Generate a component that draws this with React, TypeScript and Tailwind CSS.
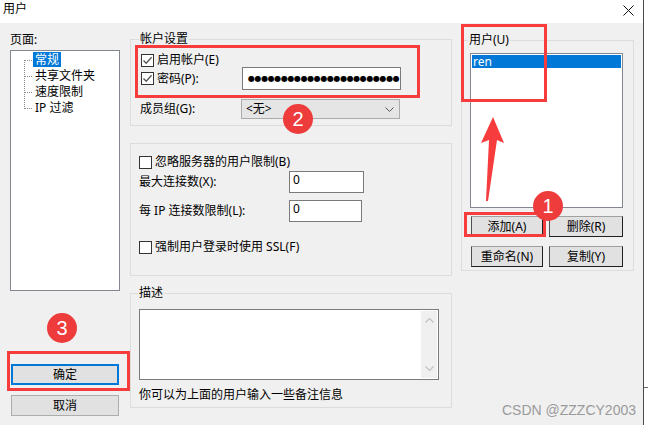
import React from 'react';

function Checkbox({ checked }: { checked?: boolean }) {
  return (
    <span className="w-[13px] h-[13px] border border-[#333333] bg-white flex items-center justify-center shrink-0">
      {checked && (
        <svg width="11" height="11" viewBox="0 0 11 11">
          <path d="M1.5 5.5 L4.2 8.3 L9.6 2.2" stroke="#555555" strokeWidth="1.3" fill="none" />
        </svg>
      )}
    </span>
  );
}

function ClassicButton({ label, className = '' }: { label: string; className?: string }) {
  return (
    <div
      className={`h-[21px] flex items-center justify-center bg-[#e1e1e1] border border-t-[#a0a0a0] border-l-[#505050] border-r-[#202020] border-b-[#202020] ${className}`}
    >
      {label}
    </div>
  );
}

function TextBox({ value, className = '' }: { value: string; className?: string }) {
  return (
    <div className={`h-[22px] border border-[#7a7a7a] bg-white pl-[3px] pt-[1px] leading-[14px] ${className}`}>
      {value}
    </div>
  );
}

function Badge({ n, className }: { n: string; className: string }) {
  return (
    <div
      className={`absolute w-[30px] h-[30px] rounded-full bg-[#ee3b3b] text-white flex items-center justify-center text-[20px] leading-none font-['Liberation_Sans',sans-serif] ${className}`}
    >
      {n}
    </div>
  );
}

export default function App() {
  const treeItems = ['常规', '共享文件夹', '速度限制', 'IP 过滤'];

  return (
    <div className="relative w-[648px] h-[425px] overflow-hidden bg-white text-black text-[12px] font-['Noto_Sans','Noto_Sans_CJK_SC',sans-serif]">
      <div className="flex h-full">
        <div className="w-[643px] flex flex-col">
          {/* title bar */}
          <div className="h-[23px] bg-white flex items-start justify-between pl-[3px] pr-[9px]">
            <span className="pt-[2px] leading-[14px]">用户</span>
            <svg className="mt-[5px]" width="11" height="11" viewBox="0 0 11 11">
              <path d="M0.5 0.5 L10.5 10.5 M10.5 0.5 L0.5 10.5" stroke="#111111" strokeWidth="1" />
            </svg>
          </div>

          <div className="flex-1 bg-[#f0f0f0] flex pl-[10px]">
            {/* left column */}
            <div className="w-[110px] flex flex-col pt-[10px]">
              <div className="leading-[14px]">页面:</div>
              <div className="relative mt-[3px] h-[241px] border border-[#828790] bg-white">
                <svg className="absolute left-0 top-0" width="30" height="70">
                  <g stroke="#8a8a8a" strokeWidth="1" strokeDasharray="1 1" shapeRendering="crispEdges">
                    <line x1="13.5" y1="9" x2="13.5" y2="58" />
                    <line x1="14" y1="9.5" x2="22" y2="9.5" />
                    <line x1="14" y1="25.5" x2="22" y2="25.5" />
                    <line x1="14" y1="41.5" x2="22" y2="41.5" />
                    <line x1="14" y1="57.5" x2="22" y2="57.5" />
                  </g>
                </svg>
                <div className="pt-[1px] pl-[22px] flex flex-col">
                  {treeItems.map((t, i) => (
                    <div key={t} className="h-[16px] flex items-start">
                      <span className={`h-[15px] leading-[15px] px-[2px] ${i === 0 ? 'bg-[#0078d7] text-white' : ''}`}>{t}</span>
                    </div>
                  ))}
                </div>
              </div>
              <div className="mt-[73px] ml-[1px] w-[108px] h-[21px] border-2 border-[#0078d7] bg-[#e1e1e1] flex items-center justify-center">
                确定
              </div>
              <div className="mt-[10px] ml-[1px] w-[108px] h-[21px] border border-[#adadad] bg-[#e1e1e1] flex items-center justify-center">
                取消
              </div>
            </div>

            {/* middle column */}
            <div className="ml-[10px] w-[322px] flex flex-col">
              <fieldset className="mt-[9px] h-[94px] border border-[#dcdcdc]">
                <legend className="ml-[8px] px-[1px] leading-[14px]">帐户设置</legend>
                <div className="pl-[10px] pt-[7px]">
                  <div className="h-[14px] flex items-center gap-[3px]">
                    <Checkbox checked />
                    <span>启用帐户(E)</span>
                  </div>
                  <div className="h-[23px] flex items-center">
                    <div className="w-[101px] flex items-center gap-[3px]">
                      <Checkbox checked />
                      <span>密码(P):</span>
                    </div>
                    <div className="w-[159px] h-[23px] border border-[#7a7a7a] bg-white pl-[5px] flex items-center overflow-hidden whitespace-nowrap">
                      <span className="text-[8px] tracking-[-0.4px] leading-none font-['DejaVu_Sans',sans-serif]">
                        ●●●●●●●●●●●●●●●●●●●●●●●
                      </span>
                    </div>
                  </div>
                  <div className="mt-[9px] h-[20px] flex items-center">
                    <div className="w-[101px] -ml-[1px]">成员组(G):</div>
                    <div className="w-[159px] h-[20px] border border-[#acacac] bg-[#e5e5e5] pl-[4px] pr-[5px] flex items-center justify-between">
                      <span>&lt;无&gt;</span>
                      <svg width="9" height="5" viewBox="0 0 9 5">
                        <path d="M0.5 0.5 L4.5 4.5 L8.5 0.5" stroke="#555555" strokeWidth="1" fill="none" />
                      </svg>
                    </div>
                  </div>
                </div>
              </fieldset>

              <fieldset className="mt-[17px] h-[133px] border border-[#dcdcdc] pl-[8px]">
                <div className="mt-[11px] h-[14px] flex items-center gap-[3px]">
                  <Checkbox />
                  <span>忽略服务器的用户限制(B)</span>
                </div>
                <div className="mt-[2px] flex items-center">
                  <div className="w-[150px]">最大连接数(X):</div>
                  <TextBox value="0" className="w-[75px]" />
                </div>
                <div className="mt-[7px] flex items-center">
                  <div className="w-[150px]">每 IP 连接数限制(L):</div>
                  <TextBox value="0" className="w-[73px]" />
                </div>
                <div className="mt-[18px] h-[14px] flex items-center gap-[3px]">
                  <Checkbox />
                  <span>强制用户登录时使用 SSL(F)</span>
                </div>
              </fieldset>

              <fieldset className="mt-[10px] h-[122px] border border-[#dcdcdc]">
                <legend className="ml-[7px] px-[1px] leading-[14px]">描述</legend>
                <div className="pl-[8px]">
                  <div className="mt-[9px] w-[300px] h-[71px] border border-[#7a7a7a] bg-white flex justify-end">
                    <div className="w-[16px] my-[1px] mr-[1px] bg-[#f0f0f0] flex flex-col items-center justify-between py-[7px]">
                      <svg width="9" height="5" viewBox="0 0 9 5">
                        <path d="M0.5 4.5 L4.5 0.5 L8.5 4.5" stroke="#c2c2c2" strokeWidth="1.2" fill="none" />
                      </svg>
                      <svg width="9" height="5" viewBox="0 0 9 5">
                        <path d="M0.5 0.5 L4.5 4.5 L8.5 0.5" stroke="#c2c2c2" strokeWidth="1.2" fill="none" />
                      </svg>
                    </div>
                  </div>
                  <div className="mt-[8px] leading-[14px]">你可以为上面的用户输入一些备注信息</div>
                </div>
              </fieldset>
            </div>

            {/* right column */}
            <div className="ml-[9px] w-[173px] flex flex-col">
              <fieldset className="mt-[10px] h-[238px] border border-[#dcdcdc]">
                <legend className="ml-[6px] px-[1px] leading-[14px]">用户(U)</legend>
                <div className="pl-[8px]">
                  <div className="mt-[6px] w-[153px] h-[155px] border border-[#828790] bg-white pt-[1px] px-[1px]">
                    <div className="h-[13px] leading-[13px] bg-[#0078d7] text-white pl-[1px]">ren</div>
                  </div>
                  <div className="mt-[8px] flex gap-[6px]">
                    <ClassicButton label="添加(A)" className="ml-[1px] w-[72px]" />
                    <ClassicButton label="删除(R)" className="w-[74px]" />
                  </div>
                  <div className="mt-[9px] flex gap-[6px]">
                    <ClassicButton label="重命名(N)" className="ml-[1px] w-[72px]" />
                    <ClassicButton label="复制(Y)" className="w-[74px]" />
                  </div>
                </div>
              </fieldset>
            </div>
          </div>
        </div>
        <div className="w-[1px] bg-[#4a4a4a]" />
        <div className="flex-1 bg-white pt-[387px]">
          <div className="h-[1px] bg-[#6a6a6a]" />
        </div>
      </div>

      {/* annotations */}
      <div className="absolute left-[135px] top-[45px] w-[285px] h-[53px] border-[3px] border-[#f63c3c]" />
      <div className="absolute left-[461px] top-[24px] w-[86px] h-[78px] border-[3px] border-[#f63c3c]" />
      <div className="absolute left-[464px] top-[212px] w-[82px] h-[25px] border-[3px] border-[#f63c3c]" />
      <div className="absolute left-[7px] top-[351px] w-[123px] h-[40px] border-[3px] border-[#f63c3c]" />
      <svg className="absolute left-0 top-0 pointer-events-none" width="648" height="425">
        <polygon points="493,117 504,143 497,140 488,201 486,201 489,140 481,143" fill="#f63c3c" />
      </svg>
      <Badge n="2" className="left-[283px] top-[104px]" />
      <Badge n="1" className="left-[533px] top-[191px]" />
      <Badge n="3" className="left-[47px] top-[313px]" />

      <div className="absolute left-[502px] top-[402px] text-[14px] leading-[16px] text-[#9a9a9a] font-['Liberation_Sans',sans-serif]">
        CSDN @ZZZCY2003
      </div>
    </div>
  );
}
